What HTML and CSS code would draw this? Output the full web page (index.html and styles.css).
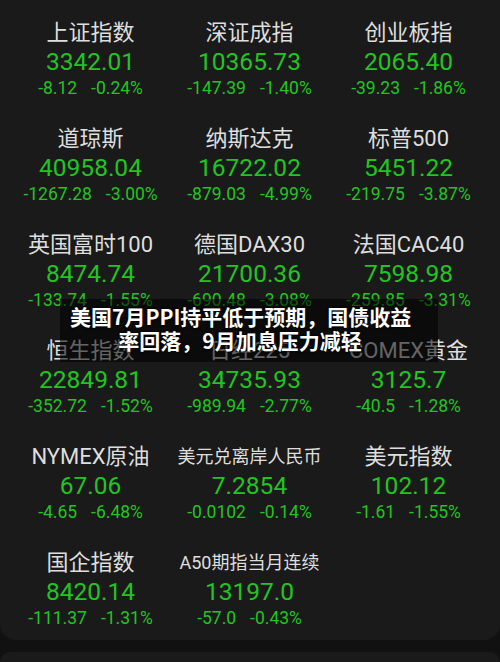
FILE: index.html
```html
<!DOCTYPE html>
<html lang="zh-CN">
<head>
  <meta charset="UTF-8">
  <title>全球指数</title>
  <link rel="stylesheet" href="styles.css">
</head>
<body>
  <div class="card market">
    <div class="grid">
      <div class="cell">
        <div class="name">上证指数</div>
        <div class="price">3342.01</div>
        <div class="change"><span>-8.12</span><span>-0.24%</span></div>
      </div>
      <div class="cell">
        <div class="name">深证成指</div>
        <div class="price">10365.73</div>
        <div class="change"><span>-147.39</span><span>-1.40%</span></div>
      </div>
      <div class="cell">
        <div class="name">创业板指</div>
        <div class="price">2065.40</div>
        <div class="change"><span>-39.23</span><span>-1.86%</span></div>
      </div>

      <div class="cell">
        <div class="name">道琼斯</div>
        <div class="price">40958.04</div>
        <div class="change"><span>-1267.28</span><span>-3.00%</span></div>
      </div>
      <div class="cell">
        <div class="name">纳斯达克</div>
        <div class="price">16722.02</div>
        <div class="change"><span>-879.03</span><span>-4.99%</span></div>
      </div>
      <div class="cell">
        <div class="name">标普500</div>
        <div class="price">5451.22</div>
        <div class="change"><span>-219.75</span><span>-3.87%</span></div>
      </div>

      <div class="cell">
        <div class="name">英国富时100</div>
        <div class="price">8474.74</div>
        <div class="change"><span>-133.74</span><span>-1.55%</span></div>
      </div>
      <div class="cell">
        <div class="name">德国DAX30</div>
        <div class="price">21700.36</div>
        <div class="change"><span>-690.48</span><span>-3.08%</span></div>
      </div>
      <div class="cell">
        <div class="name">法国CAC40</div>
        <div class="price">7598.98</div>
        <div class="change"><span>-259.85</span><span>-3.31%</span></div>
      </div>

      <div class="cell">
        <div class="name">恒生指数</div>
        <div class="price">22849.81</div>
        <div class="change"><span>-352.72</span><span>-1.52%</span></div>
      </div>
      <div class="cell">
        <div class="name">日经225</div>
        <div class="price">34735.93</div>
        <div class="change"><span>-989.94</span><span>-2.77%</span></div>
      </div>
      <div class="cell">
        <div class="name">COMEX黄金</div>
        <div class="price">3125.7</div>
        <div class="change"><span>-40.5</span><span>-1.28%</span></div>
      </div>

      <div class="cell">
        <div class="name">NYMEX原油</div>
        <div class="price">67.06</div>
        <div class="change"><span>-4.65</span><span>-6.48%</span></div>
      </div>
      <div class="cell">
        <div class="name small">美元兑离岸人民币</div>
        <div class="price">7.2854</div>
        <div class="change"><span>-0.0102</span><span>-0.14%</span></div>
      </div>
      <div class="cell">
        <div class="name">美元指数</div>
        <div class="price">102.12</div>
        <div class="change"><span>-1.61</span><span>-1.55%</span></div>
      </div>

      <div class="cell">
        <div class="name">国企指数</div>
        <div class="price">8420.14</div>
        <div class="change"><span>-111.37</span><span>-1.31%</span></div>
      </div>
      <div class="cell">
        <div class="name small">A50期指当月连续</div>
        <div class="price">13197.0</div>
        <div class="change"><span>-57.0</span><span>-0.43%</span></div>
      </div>
    </div>
  </div>

  <div class="card next"></div>

  <div class="headline">
    <p>美国7月PPI持平低于预期，国债收益<br>率回落，9月加息压力减轻</p>
  </div>
</body>
</html>
```

FILE: styles.css
```css
html, body {
  margin: 0;
  padding: 0;
}
body {
  width: 500px;
  height: 662px;
  overflow: hidden;
  background: #111111;
  font-family: Roboto, "Noto Sans CJK SC", sans-serif;
  position: relative;
}
.card {
  background: #1a1a1a;
}
.market {
  padding: 18px 0 10px 11px;
  border-radius: 0 0 16px 16px;
}
.next {
  margin-top: 12px;
  height: 10px;
  border-radius: 16px 16px 0 0;
}
.grid {
  display: grid;
  grid-template-columns: repeat(3, 159px);
  row-gap: 24px;
}
.cell {
  text-align: center;
}
.name {
  height: 30px;
  line-height: 30px;
  font-size: 22px;
  color: #dedede;
  white-space: nowrap;
}
.name.small {
  font-size: 18px;
}
.price {
  height: 28px;
  line-height: 28px;
  font-size: 24.5px;
  color: #22c422;
}
.change {
  height: 24px;
  line-height: 24px;
  font-size: 17.5px;
  color: #22c422;
  display: flex;
  justify-content: center;
  gap: 14px;
  white-space: nowrap;
}
.headline {
  position: absolute;
  left: 60px;
  top: 299px;
  width: 378px;
  height: 63px;
  box-sizing: border-box;
  padding: 5px 28px 0 10px;
  background: rgba(0, 0, 0, 0.55);
}
.headline p {
  margin: 0;
  text-align: center;
  font-family: "Noto Sans CJK SC", sans-serif;
  font-weight: bold;
  font-size: 21px;
  line-height: 24px;
  color: #ffffff;
  white-space: nowrap;
  text-shadow: 0 0 3px #000, 0 0 2px #000;
}
```
